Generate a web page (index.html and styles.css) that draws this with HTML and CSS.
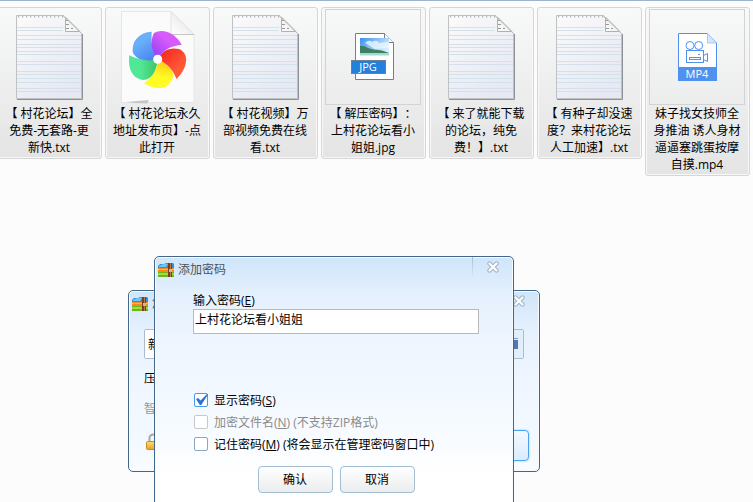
FILE: index.html
```
<!DOCTYPE html>
<html lang="zh-CN">
<head>
  <meta charset="UTF-8" />
  <meta name="viewport" content="width=device-width, initial-scale=1.0"/>
  <title>添加密码</title>
  <link rel="stylesheet" href="styles.css">
</head>
<body>
  <!-- shared icons -->
  <svg class="sprite" width="0" height="0" aria-hidden="true">
    <defs>
      <linearGradient id="paper" x1="0" y1="0" x2="0.6" y2="1">
        <stop offset="0" stop-color="#fbfbfb"/>
        <stop offset="1" stop-color="#e6e8f3"/>
      </linearGradient>
      <linearGradient id="fold" x1="0" y1="1" x2="1" y2="0">
        <stop offset="0" stop-color="#fff"/>
        <stop offset="1" stop-color="#e0e0e0"/>
      </linearGradient>
      <linearGradient id="purple" x1="1" y1="0" x2="0" y2="1">
        <stop offset="0.4" stop-color="#d75bfb"/>
        <stop offset="1" stop-color="#8a3cf0"/>
      </linearGradient>
      <linearGradient id="red" x1="0" y1="0" x2="1" y2="1">
        <stop offset="0" stop-color="#f51e1e"/>
        <stop offset="0.7" stop-color="#ff5a36"/>
      </linearGradient>
      <linearGradient id="yellow" x1="0.6" y1="0" x2="0.4" y2="1">
        <stop offset="0" stop-color="#ffc414"/>
        <stop offset="0.6" stop-color="#fffb25"/>
      </linearGradient>
      <linearGradient id="green" x1="0" y1="0" x2="1" y2="0">
        <stop offset="0.4" stop-color="#50e896"/>
        <stop offset="1" stop-color="#3fc463"/>
      </linearGradient>
      <linearGradient id="blue" x1="0" y1="0" x2="0.6" y2="1">
        <stop offset="0.4" stop-color="#69affa"/>
        <stop offset="1" stop-color="#4b87f5"/>
      </linearGradient>
      <linearGradient id="sky" x1="0" y1="0" x2="1" y2="0.6">
        <stop offset="0" stop-color="#3c8fee"/>
        <stop offset="1" stop-color="#d8f2ff"/>
      </linearGradient>
      <linearGradient id="gold" x1="0" y1="0" x2="0" y2="1">
        <stop offset="0" stop-color="#ffdc6e"/>
        <stop offset="1" stop-color="#f0a020"/>
      </linearGradient>
    </defs>

    <symbol id="icon-txt" viewBox="0 0 96 96">
      <path d="M16 90.500H81.500V25" fill="none" stroke="#8e9196"/>
      <path d="M15.500 6.500H62L80.500 24.500V89.500H15.500Z" fill="url(#paper)" stroke="#bfc1c4"/>
      <path d="M16 18.500H62M16 21.500H62M16 26.500H80M16 30.500H80M16 35.500H80M16 38.500H80M16 42.500H80M16 45.500H80M16 52.500H80M16 55.500H80M16 62.500H80M16 65.500H80M16 69.500H80M16 73.500H80M16 79.500H80M16 82.500H80" stroke="#d2e1ea"/>
      <path d="M17 7.500H62" stroke="#b4b4b4" stroke-width="2" stroke-dasharray="1.200 2.800"/>
      <path d="M64.500 8V22.500H79Z" fill="url(#fold)" stroke="#b0b0b0"/>
      <path d="M65 11.500h2M65 15.500h3M65 19.500h3M70 19.500h2" stroke="#999"/>
      <path d="M62 6.500L80.500 24.500" stroke="#bdbdbd"/>
    </symbol>

    <symbol id="icon-wheel" viewBox="0 0 96 96">
      <path d="M12.500 2.500H62L85 25.500V93.500H12.500Z" fill="#fbfbfc" stroke="#e6e6e6"/>
      <path d="M62 2.500V25.500H85Z" fill="url(#fold)" stroke="#e3e3e3"/>
      <path d="M62 25.500H85" stroke="#c6c6c6"/>
      <path d="M17 93L40 91L38 94.500L26 94Z" fill="#c6c6c6"/>
      <path d="M48.700 50.300C38 55 27 50 24 44C22 32 31 23 42.700 22.700C42 33 43 42 48.700 50.300Z" fill="url(#blue)"/>
      <path d="M48.700 50.300C48 60 44 71 34 71C22 69 19 58 20.300 46.300C30 51 40 53 48.700 50.300Z" fill="url(#green)"/>
      <path d="M48.700 50.300C57 54 65 60 64 68C60 82 46 81 35 74.300C44 68 49 60 48.700 50.300Z" fill="url(#yellow)"/>
      <path d="M48.700 50.300C53 42 60 38 70 40C80 44 80 58 67.500 70C64 61 58 54 48.700 50.300Z" fill="url(#red)"/>
      <path d="M48.700 50.300C42 42 41 32 45 24Q48 22 53 22C63 23 69 29 72.700 35.700C60 37 53 42 48.700 50.300Z" fill="url(#purple)"/>
      <circle cx="48.700" cy="50.300" r="4.500" fill="#fff"/>
    </symbol>

    <symbol id="icon-jpg" viewBox="0 0 96 96">
      <path d="M30.500 24.500H59.500L68.500 33.500V70.500H30.500Z" fill="#fff" stroke="#7d7d7d"/>
      <path d="M59.500 24.500V33.500H68.500" fill="#fff" stroke="#7d7d7d"/>
      <rect x="35" y="29" width="29" height="17" fill="url(#sky)"/>
      <path d="M40 34q4-4 7-1q5-3 7 1l10-1v6l-14 1z" fill="#e8f7ff" opacity="0.800"/>
      <path d="M35 37q4-1 8 2q6 2 10 2t11 3v1H35Z" fill="#3f7f62"/>
      <path d="M35 44h29v2.500H35Z" fill="#a5d8d2"/>
      <rect x="26.500" y="51.500" width="34" height="13" fill="#2381dc" stroke="#6c7f94"/>
      <text x="43" y="62" text-anchor="middle" class="icon-text">JPG</text>
    </symbol>

    <symbol id="icon-mp4" viewBox="0 0 96 96">
      <path d="M29.500 24.500H58.500L67.500 34V71.500H29.500Z" fill="#fff" stroke="#5090ef"/>
      <path d="M58.500 24.500V34H67.500Z" fill="#d8e6fc" stroke="#a9c8f7"/>
      <rect x="29" y="58" width="39" height="14" fill="#5090ef"/>
      <g fill="none" stroke="#5090ef">
        <circle cx="41" cy="36.500" r="4"/>
        <circle cx="49.700" cy="36.500" r="4"/>
        <rect x="37.500" y="41.500" width="17" height="12"/>
        <rect x="40.500" y="48.500" width="11" height="2"/>
        <path d="M49 45.500h2M54.500 46.500L58.500 44.500V52.500L54.500 50.500"/>
      </g>
      <text x="48" y="69" text-anchor="middle" class="icon-text">MP4</text>
    </symbol>

    <symbol id="icon-zip" viewBox="0 0 16 14">
      <path d="M0 3L2 1H6L8 0H15L16 1V6H0Z" fill="#2b93dc"/>
      <path d="M1 3Q6 0 10 1L8 4H1Z" fill="#6cc6f8"/>
      <path d="M0 5H16V10H0Z" fill="#f48a20"/>
      <path d="M0 6H16V7H0Z" fill="#ffb654"/>
      <path d="M0 9H16V14H0Z" fill="#6cb522"/>
      <path d="M0 10H16V12H0Z" fill="#a9dc30"/>
      <path d="M10 0H14V14H10Z" fill="#7a3f22"/>
      <path d="M12 0H13V14H12Z" fill="#b9784a"/>
      <path d="M11 6H14V9H11Z" fill="#d8b58c"/>
    </symbol>

    <symbol id="icon-close" viewBox="0 0 12 12">
      <path d="M2.500 2.500L9.500 9.500M9.500 2.500L2.500 9.500" stroke="#a3b3c4" stroke-width="4.400" stroke-linecap="round"/>
      <path d="M2.500 2.500L9.500 9.500M9.500 2.500L2.500 9.500" stroke="#fafcfe" stroke-width="2.400" stroke-linecap="round"/>
    </symbol>
  </svg>

  <main class="desktop">
    <ul class="files">
      <li class="file">
        <svg class="file-icon"><use href="#icon-txt"/></svg>
        <span>【 村花论坛】全<br>免费-无套路-更<br>新快.txt</span>
      </li>
      <li class="file">
        <svg class="file-icon"><use href="#icon-wheel"/></svg>
        <span>【 村花论坛永久<br>地址发布页】-点<br>此打开</span>
      </li>
      <li class="file">
        <svg class="file-icon"><use href="#icon-txt"/></svg>
        <span>【 村花视频】万<br>部视频免费在线<br>看.txt</span>
      </li>
      <li class="file">
        <svg class="file-icon framed"><use href="#icon-jpg"/></svg>
        <span>【 解压密码】：<br>上村花论坛看小<br>姐姐.jpg</span>
      </li>
      <li class="file">
        <svg class="file-icon"><use href="#icon-txt"/></svg>
        <span>【 来了就能下载<br>的论坛，纯免<br>费！】.txt</span>
      </li>
      <li class="file">
        <svg class="file-icon"><use href="#icon-txt"/></svg>
        <span>【 有种子却没速<br>度？来村花论坛<br>人工加速】.txt</span>
      </li>
      <li class="file">
        <svg class="file-icon framed"><use href="#icon-mp4"/></svg>
        <span>妹子找女技师全<br>身推油 诱人身材<br>逼逼塞跳蛋按摩<br>自摸.mp4</span>
      </li>
    </ul>

    <section class="window archive-window">
      <header class="titlebar">
        <svg class="app-icon"><use href="#icon-zip"/></svg>
        <h2>您</h2>
        <button class="close" type="button" aria-label="关闭"><svg><use href="#icon-close"/></svg></button>
      </header>
      <div class="archive-body">
        <div class="path-row">
          <input type="text" value="新" aria-label="新">
          <button type="button" aria-label="浏览">
            <svg viewBox="0 0 14 14"><path d="M0 1.500H14" stroke="#7f9cc4"/><path d="M0 3H14V12H0Z" fill="#5577ad"/></svg>
          </button>
        </div>
        <p>压</p>
        <p class="muted">智</p>
        <div class="archive-footer">
          <svg class="lock" viewBox="0 0 16 18">
            <path d="M3.500 9V5Q3.500 1.500 8 1.500T12.500 5V9" fill="none" stroke="#a9a9a9" stroke-width="2"/>
            <rect x="0.500" y="8.500" width="15" height="8" rx="1" fill="url(#gold)" stroke="#c78a25"/>
          </svg>
          <button class="primary" type="button" aria-label="立即压缩"></button>
        </div>
      </div>
    </section>

    <section class="window password-window">
      <header class="titlebar">
        <svg class="app-icon"><use href="#icon-zip"/></svg>
        <h2>添加密码</h2>
        <button class="close" type="button" aria-label="关闭"><svg><use href="#icon-close"/></svg></button>
      </header>
      <form class="password-form">
        <label for="password">输入密码(<u>E</u>)</label>
        <input type="text" id="password" value="上村花论坛看小姐姐">
        <div class="options">
          <label><input type="checkbox" checked>显示密码(<u>S</u>)</label>
          <label class="muted"><input type="checkbox" disabled>加密文件名(<u>N</u>) (不支持ZIP格式)</label>
          <label><input type="checkbox">记住密码(<u>M</u>) (将会显示在管理密码窗口中)</label>
        </div>
        <div class="buttons">
          <button type="button">确认</button>
          <button type="button">取消</button>
        </div>
      </form>
    </section>
  </main>
</body>
</html>
```

FILE: styles.css
```
* {
  box-sizing: border-box;
}
body {
  margin: 0;
  font-family: "Open Sans", "Noto Sans CJK SC", sans-serif;
  font-size: 12px;
  line-height: 17px;
  text-spacing-trim: space-all;
  color: #000;
  background: #fcfcfc;
}
input, button {
  font: inherit;
  color: inherit;
}
.sprite {
  position: absolute;
}
.desktop {
  position: relative;
  height: 100vh;
  overflow: hidden;
  border-top: 1px solid #9fb2d0;
}

/* file list */
.files {
  display: flex;
  align-items: flex-start;
  gap: 3px;
  margin: 6px 0 0 -3px;
  padding: 0;
  list-style: none;
}
.file {
  flex: none;
  width: 105px;
  padding: 1px 4px 2px 3px;
  border: 1px solid #d6d6d6;
  border-radius: 3px;
  background: linear-gradient(#f8f9f9, #e4e4e4);
  box-shadow: inset 0 0 0 1px #f8f8f8;
  text-align: center;
  white-space: nowrap;
}
.file-icon {
  display: block;
  width: 96px;
  height: 96px;
}
.framed {
  outline: 1px solid #d3d3d3;
  outline-offset: -1px;
}
.icon-text {
  font-family: "Open Sans", sans-serif;
  font-size: 11px;
  fill: #fff;
}

/* windows */
.window {
  position: absolute;
  border: 1px solid #42678a;
  border-radius: 5px;
  background: linear-gradient(#cfe5fa, #e5f1fd 40px, #eff6ff 90px, #f3f9ff 150px, #fff 220px);
  box-shadow: inset 0 0 0 1px #f6fbff;
}
.archive-window {
  left: 128px;
  top: 289px;
  width: 412px;
}
.password-window {
  left: 154px;
  top: 255px;
  width: 360px;
}
.titlebar {
  display: flex;
  align-items: flex-start;
  height: 25px;
  padding-left: 3px;
}
.titlebar h2 {
  flex: 1;
  margin: 4px 0 0 4px;
  font-size: 12px;
  font-weight: normal;
  color: #4c5258;
}
.app-icon {
  width: 16px;
  height: 14px;
  margin-top: 6px;
}
.close {
  width: 41px;
  height: 20px;
  padding: 0;
  border: 0;
  border-left: 1px solid;
  border-image: linear-gradient(#a3bcd3, #d9e9f8) 1;
  background: none;
}
.close svg {
  display: block;
  width: 12px;
  height: 12px;
  margin: 0 auto;
}

.archive-body {
  padding: 13px 10px 10px 15px;
}
.path-row {
  display: flex;
  height: 30px;
  margin-right: 5px;
  border: 1px solid #abbbd0;
  border-radius: 2px;
}
.path-row input {
  flex: 1;
  min-width: 0;
  padding: 0 3px;
  border: 0;
  background: #fff;
}
.path-row button {
  width: 30px;
  padding: 0 5px 0 11px;
  border: 0;
  background: #e2eefa;
}
.path-row svg {
  display: block;
  width: 14px;
  height: 14px;
}
.archive-body p {
  margin: 11px 0 13px;
}
.archive-body .muted {
  color: #999;
}
.archive-footer {
  display: flex;
  justify-content: space-between;
  align-items: flex-start;
}
.lock {
  width: 16px;
  height: 18px;
  margin: 3px 2px;
}
.primary {
  width: 90px;
  height: 31px;
  border: 1px solid #4ba3ee;
  border-radius: 4px;
  background: linear-gradient(#f3f9ff, #d9ecfd);
  box-shadow: 0 0 2px #7cc0fa;
}

/* password dialog */
.password-form {
  padding: 10px 34px 20px 38px;
}
.password-form > label {
  display: block;
}
.password-form input[type="text"] {
  display: block;
  width: 100%;
  height: 25px;
  padding: 0 1px 6px;
  border: 1px solid #b9b9b9;
  background: #fff;
}
.options {
  margin-top: 55px;
}
.options label {
  display: flex;
  align-items: center;
  height: 22px;
  white-space: pre;
}
.options .muted {
  color: #8a8a8a;
}
.options input {
  appearance: none;
  position: relative;
  width: 14px;
  height: 14px;
  margin: 0 6px 0 1px;
  border: 1px solid #8ba5c2;
  border-radius: 2px;
  background: #fff;
}
.options input:disabled {
  border-color: #c8c8c8;
}
.options input:checked {
  border-color: #4a9ae6;
}
.options input:checked::after {
  content: "";
  position: absolute;
  left: 1px;
  top: 0;
  width: 12px;
  height: 11px;
  background: #2f72d2;
  clip-path: polygon(0 45%, 18% 36%, 38% 60%, 92% 0, 100% 4%, 44% 100%, 32% 100%);
}
.buttons {
  display: flex;
  justify-content: center;
  gap: 7px;
  margin-top: 11px;
}
.buttons button {
  width: 75px;
  height: 27px;
  padding: 0;
  border: 1px solid #a3bdd3;
  border-radius: 4px;
  background: linear-gradient(#fff, #ebeced);
}
```
